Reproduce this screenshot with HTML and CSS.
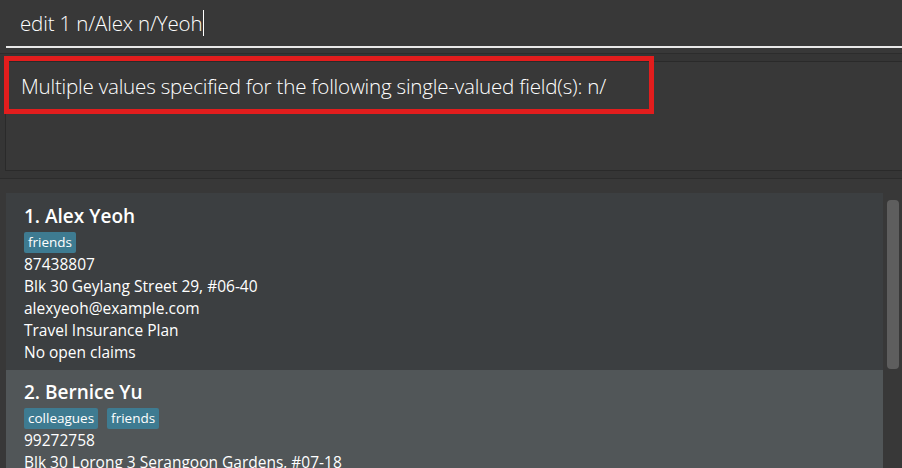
FILE: index.html
```html
<!DOCTYPE html>
<html>
<head>
<meta charset="utf-8">
<link rel="stylesheet" href="styles.css">
</head>
<body>
<div class="app">
  <div class="command-box">
    <div class="command-field">
      <span class="cmd-text">edit 1 n/Alex n/Yeoh</span><span class="caret"></span>
    </div>
  </div>
  <div class="result-wrap">
    <div class="result-box">
      <div class="result-text">Multiple values specified for the following single-valued field(s): n/</div>
    </div>
  </div>
  <div class="list-pane">
    <div class="list">
      <div class="card">
        <div class="name">1. Alex Yeoh</div>
        <div class="tags"><span class="tag">friends</span></div>
        <div class="line">87438807</div>
        <div class="line">Blk 30 Geylang Street 29, #06-40</div>
        <div class="line">alexyeoh@example.com</div>
        <div class="line">Travel Insurance Plan</div>
        <div class="line">No open claims</div>
      </div>
      <div class="card selected">
        <div class="name">2. Bernice Yu</div>
        <div class="tags"><span class="tag">colleagues</span><span class="tag">friends</span></div>
        <div class="line">99272758</div>
        <div class="line">Blk 30 Lorong 3 Serangoon Gardens, #07-18</div>
      </div>
    </div>
    <div class="scrollbar"><div class="thumb"></div></div>
  </div>
  <div class="annotation"></div>
</div>
</body>
</html>
```
FILE: styles.css
```css
html, body {
  margin: 0;
  padding: 0;
  background: #383838;
}
.app {
  position: relative;
  width: 902px;
  height: 468px;
  overflow: hidden;
  background: #383838;
  display: flex;
  flex-direction: column;
  font-family: "Open Sans", "Liberation Sans", sans-serif;
}
.command-box {
  flex-shrink: 0;
  height: 54px;
  box-sizing: border-box;
  border-bottom: 1px solid #2c2c2c;
  background: #383838;
  padding-left: 6px;
}
.command-field {
  height: 48px;
  box-sizing: border-box;
  border-bottom: 2px solid #e8e8e8;
  display: flex;
  align-items: center;
  padding-left: 14px;
  padding-bottom: 0;
}
.cmd-text {
  color: #ffffff;
  font-weight: 300;
  font-size: 20.5px;
  letter-spacing: -0.15px;
}
.caret {
  display: inline-block;
  width: 1px;
  height: 26px;
  background: #ffffff;
  margin-left: 1px;
}
.result-wrap {
  flex-shrink: 0;
  padding: 7px 0 7px 5px;
  background: #353535;
  border-bottom: 1px solid #2c2c2c;
}
.result-box {
  height: 110px;
  box-sizing: border-box;
  border: 1px solid #2a2a2a;
  border-right: none;
  background: #383838;
  padding: 10px 0 0 15px;
}
.result-text {
  color: #ffffff;
  font-weight: 300;
  font-size: 20.6px;
  letter-spacing: -0.22px;
}
.list-pane {
  flex: 1;
  min-height: 0;
  display: flex;
  padding: 14px 0 0 6px;
  background: #383838;
}
.list {
  width: 877px;
  display: flex;
  flex-direction: column;
}
.card {
  flex-shrink: 0;
  background: #3c3f41;
  padding: 10px 18px 7px 18px;
  color: #ffffff;
}
.card.selected {
  background: #515658;
  padding-top: 9px;
}
.name {
  font-weight: 600;
  font-size: 19px;
  line-height: 26px;
  color: #ffffff;
}
.tags {
  display: flex;
  gap: 9px;
  margin: 3px 0 0;
}
.tag {
  background: #3e7b91;
  color: #ffffff;
  font-size: 13.5px;
  line-height: 21px;
  padding: 0 4px;
  border-radius: 2px;
}
.line {
  font-size: 15.5px;
  line-height: 22px;
  color: #ffffff;
}
.scrollbar {
  width: 19px;
  display: flex;
  justify-content: center;
  padding-top: 7px;
}
.thumb {
  width: 12px;
  height: 169px;
  background: #5e5e5e;
  border-radius: 4px;
}
.annotation {
  position: absolute;
  left: 4px;
  top: 56px;
  width: 650px;
  height: 58px;
  box-sizing: border-box;
  border: 5px solid #e21d1d;
}
```
